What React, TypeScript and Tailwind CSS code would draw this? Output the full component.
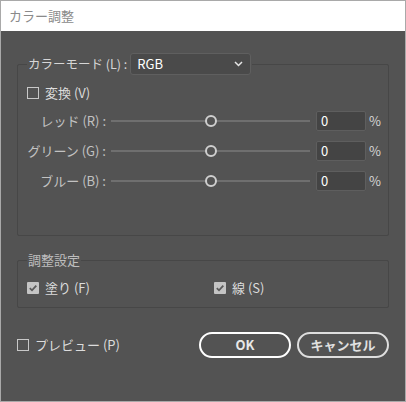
import { ReactNode } from 'react'

const font = { fontFamily: '"Noto Sans CJK JP", "Noto Sans", sans-serif' }

function Box({ checked }: { checked?: boolean }) {
  if (checked) {
    return (
      <span className="flex h-[12px] w-[12px] items-center justify-center rounded-[1px] bg-[#c4c4c4]">
        <svg width="10" height="10" viewBox="0 0 10 10">
          <path d="M1.8 5.2 L4 7.3 L8.3 2.6" fill="none" stroke="#5a5a5a" strokeWidth="1.8" />
        </svg>
      </span>
    )
  }
  return <span className="h-[12px] w-[12px] border border-[#c8c8c8]" />
}

function Check({ label, checked, className = '' }: { label: ReactNode; checked?: boolean; className?: string }) {
  return (
    <label className={`flex items-center gap-[6px] text-[13px] leading-[16px] text-[#dcdcdc] ${className}`}>
      <Box checked={checked} />
      <span>{label}</span>
    </label>
  )
}

function SliderRow({ label }: { label: string }) {
  return (
    <div className="flex h-[20px] items-center">
      <div className="w-[89px] pr-[1px] text-right text-[13px] text-[#c2c2c2]">{label}</div>
      <div className="relative ml-[4px] h-[2px] w-[199px] bg-[#6f6f6f]">
        <span className="absolute left-[94px] top-[-5px] h-[12px] w-[12px] rounded-full border-2 border-[#cfcfcf] bg-[#535353]" />
      </div>
      <div className="ml-[6px] flex h-[20px] w-[50px] items-center rounded-[2px] border border-[#5e5e5e] bg-[#444444] pl-[4px] text-[13px] text-white">
        0
      </div>
      <span className="ml-[3px] text-[13px] text-[#d6d6d6]">%</span>
    </div>
  )
}

export default function App() {
  return (
    <div
      className="flex h-[402px] w-[406px] flex-col border border-[#a9a9a9] bg-[#535353]"
      style={font}
    >
      <div className="flex h-[30px] items-center bg-white pl-[8px] text-[13px] text-[#8a8a8a]">
        カラー調整
      </div>

      <div className="flex flex-1 flex-col px-[16px] pt-[22px]">
        <fieldset className="h-[183px] rounded-[2px] border border-[#474747]">
          <legend className="ml-[9px] flex items-center px-[1px]">
            <span className="text-[12.5px] text-[#d6d6d6]">カラーモード (L) :</span>
            <div className="ml-[3px] flex h-[22px] w-[121px] items-center justify-between rounded-[3px] border border-[#5f5f5f] bg-[#4a4a4a] pl-[6px] pr-[7px] text-[13px] text-white">
              <span>RGB</span>
              <svg width="9" height="6" viewBox="0 0 9 6">
                <path d="M1 1 L4.5 4.5 L8 1" fill="none" stroke="#e6e6e6" strokeWidth="1.5" />
              </svg>
            </div>
          </legend>
          <Check label="変換 (V)" className="ml-[9px] mt-[10px]" />
          <div className="mt-[10px] flex flex-col gap-[10px]">
            <SliderRow label="レッド (R) :" />
            <SliderRow label="グリーン (G) :" />
            <SliderRow label="ブルー (B) :" />
          </div>
        </fieldset>

        <fieldset className="mt-[16px] h-[56px] rounded-[2px] border border-[#474747]">
          <legend className="ml-[9px] px-[1px] text-[13px] leading-[16px] text-[#bebebe]">調整設定</legend>
          <div className="mt-[12px] flex pl-[9px]">
            <Check label="塗り (F)" checked className="w-[187px]" />
            <Check label="線 (S)" checked />
          </div>
        </fieldset>

        <div className="mt-[24px] flex items-center">
          <Check label="プレビュー (P)" />
          <div className="ml-auto flex gap-[6px]">
            <button className="h-[26px] w-[92px] rounded-full border-2 border-white text-[13px] font-semibold text-[#e8e8e8]">
              OK
            </button>
            <button className="h-[26px] w-[92px] rounded-full border-2 border-[#dedede] text-[13px] font-semibold text-[#e0e0e0]">
              キャンセル
            </button>
          </div>
        </div>
      </div>
    </div>
  )
}
